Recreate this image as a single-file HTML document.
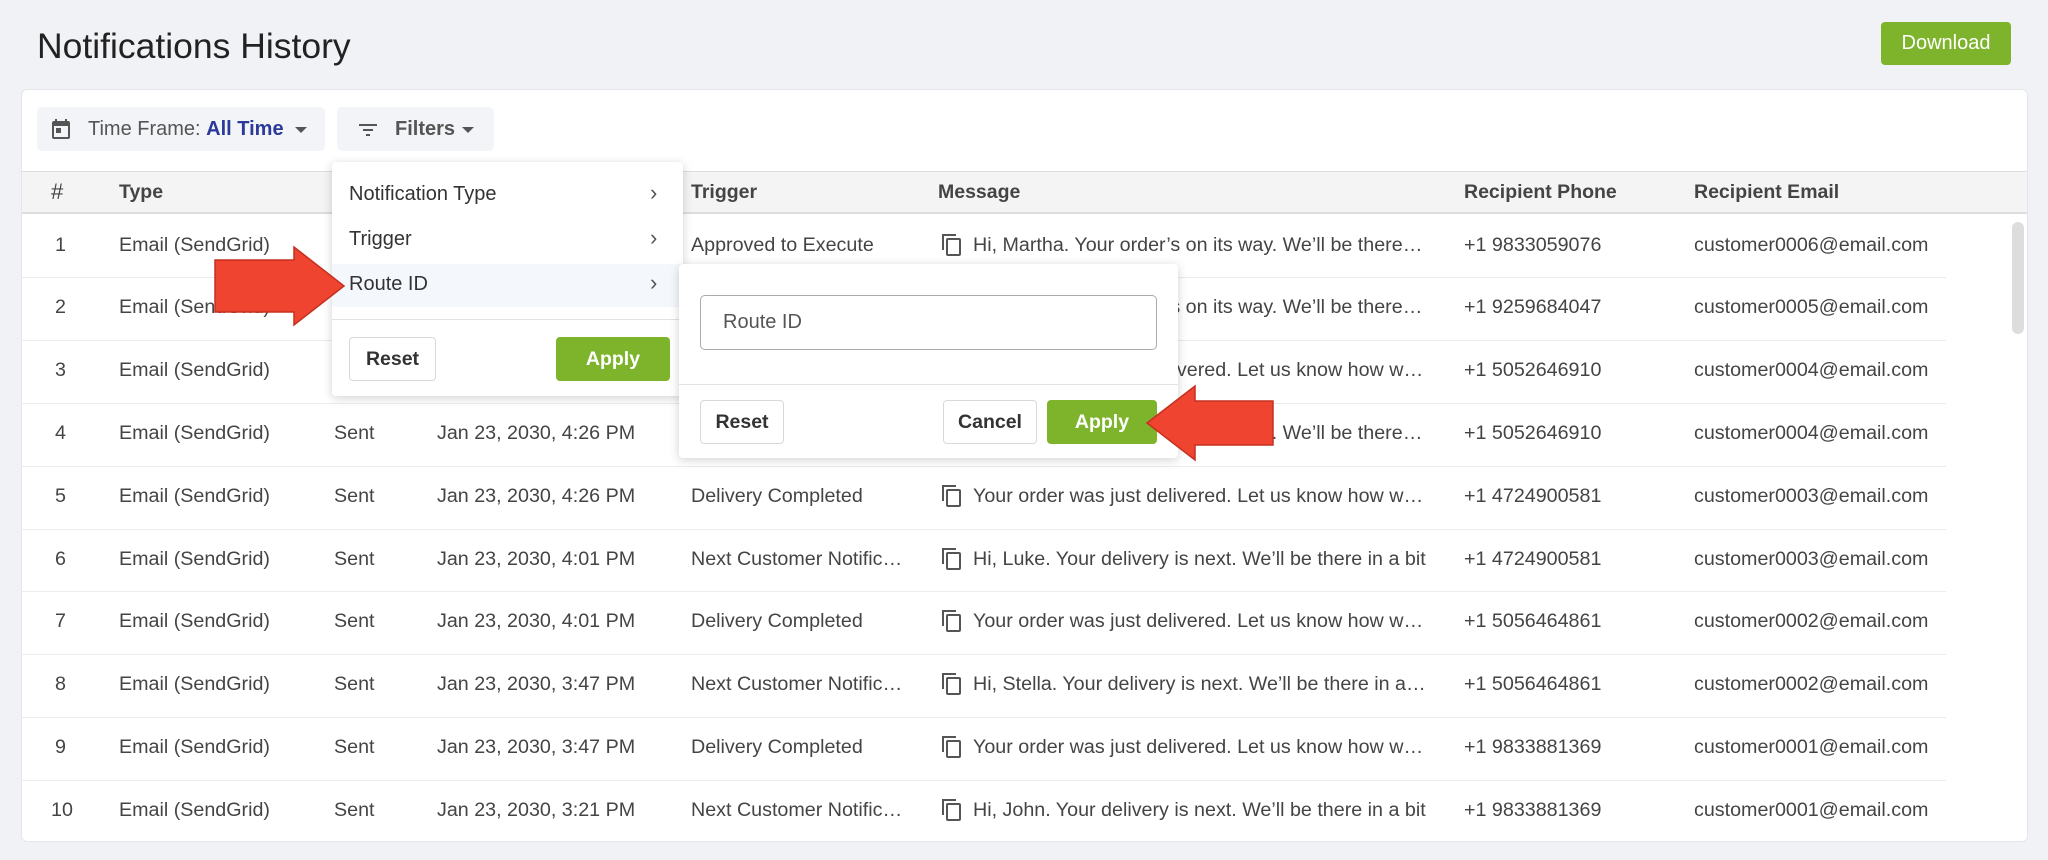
<!DOCTYPE html>
<html><head><meta charset="utf-8"><style>
*{box-sizing:border-box;margin:0;padding:0}
body{width:2048px;height:860px;overflow:hidden;background:#f1f2f6;font-family:"Liberation Sans",sans-serif;color:#3c3c3c;position:relative}
.a{position:absolute;white-space:nowrap}
.card{position:absolute;left:21px;top:89px;width:2007px;height:753px;background:#fff;border-radius:6px;border:1px solid #e4e6ea;overflow:hidden}
.btn{position:absolute;border:1px solid #d8d8d8;border-radius:4px;background:#fff;font-weight:bold;font-size:19.5px;color:#333;display:flex;align-items:center;justify-content:center}
.green{background:#7db42c;border-color:#7db42c;color:#fff}
.cell{position:absolute;font-size:19.7px;color:#444;white-space:nowrap}
.hd{position:absolute;font-size:19.5px;font-weight:bold;color:#444;top:181px}
.row{position:absolute;left:21px;width:1925px;height:1px;background:#ececec}
.pop{position:absolute;background:#fff;border-radius:4px;box-shadow:0 2px 10px rgba(0,0,0,.18)}
.chev{position:absolute;font-size:22px;color:#555}
</style></head><body>
<div class="a" style="left:37px;top:26px;font-size:35.5px;color:#222">Notifications History</div>
<div class="btn green" style="left:1881px;top:22px;width:130px;height:43px;font-weight:normal;font-size:20px">Download</div>
<div class="card"></div>
<div class="a" style="left:37px;top:107px;width:288px;height:44px;background:#f2f4f8;border-radius:5px"></div>
<svg class="a" style="left:49px;top:117px" width="24" height="24" viewBox="0 0 24 24"><path d="M19 4h-1V2h-2v2H8V2H6v2H5a2 2 0 0 0-2 2v14a2 2 0 0 0 2 2h14a2 2 0 0 0 2-2V6a2 2 0 0 0-2-2zm0 16H5V9h14zM7 11h5v5H7z" fill="#555"/></svg>
<div class="a" style="left:88px;top:118px;font-size:20px;color:#555">Time Frame: <span style="color:#2b3a9a;font-weight:bold">All Time</span></div>
<div class="a" style="left:295px;top:127px;width:0;height:0;border-left:6px solid transparent;border-right:6px solid transparent;border-top:6px solid #555"></div>
<div class="a" style="left:337px;top:107px;width:157px;height:44px;background:#f2f4f8;border-radius:5px"></div>
<svg class="a" style="left:356px;top:118px" width="24" height="24" viewBox="0 0 24 24"><path d="M3 6h18v2H3zm4 5h10v2H7zm3 5h4v2h-4z" fill="#555"/></svg>
<div class="a" style="left:395px;top:118px;font-size:20px;font-weight:bold;color:#555">Filters</div>
<div class="a" style="left:462px;top:127px;width:0;height:0;border-left:6px solid transparent;border-right:6px solid transparent;border-top:6px solid #555"></div>
<div class="a" style="left:22px;top:171px;width:2005px;height:43px;background:#f4f4f4;border-top:1px solid #ddd;border-bottom:2px solid #ddd"></div>
<div class="hd" style="left:51px;font-weight:normal;font-size:22px;top:179px">#</div>
<div class="hd" style="left:119px">Type</div>
<div class="hd" style="left:691px">Trigger</div>
<div class="hd" style="left:938px">Message</div>
<div class="hd" style="left:1464px">Recipient Phone</div>
<div class="hd" style="left:1694px">Recipient Email</div>
<div class="a" style="left:2012px;top:222px;width:12px;height:112px;background:#ddd;border-radius:6px"></div>
<div id="rows"></div>
<script>
var d=[["Approved to Execute","Hi, Martha. Your order’s on its way. We’ll be there in a bit","+1 9833059076","customer0006@email.com"],
["Approved to Execute","Hi, Martha. Your order’s on its way. We’ll be there in a bit","+1 9259684047","customer0005@email.com"],
["Delivery Completed","Your order was just delivered. Let us know how we did","+1 5052646910","customer0004@email.com"],
["Next Customer Notification","Hi, Martha. Your order’s on its way. We’ll be there in a bit","+1 5052646910","customer0004@email.com"],
["Delivery Completed","Your order was just delivered. Let us know how we did","+1 4724900581","customer0003@email.com"],
["Next Customer Notification","Hi, Luke. Your delivery is next. We’ll be there in a bit","+1 4724900581","customer0003@email.com"],
["Delivery Completed","Your order was just delivered. Let us know how we did","+1 5056464861","customer0002@email.com"],
["Next Customer Notification","Hi, Stella. Your delivery is next. We’ll be there in a bit","+1 5056464861","customer0002@email.com"],
["Delivery Completed","Your order was just delivered. Let us know how we did","+1 9833881369","customer0001@email.com"],
["Next Customer Notification","Hi, John. Your delivery is next. We’ll be there in a bit","+1 9833881369","customer0001@email.com"]];
var dates=["Jan 23, 2030, 4:26 PM","Jan 23, 2030, 4:26 PM","Jan 23, 2030, 4:26 PM","Jan 23, 2030, 4:26 PM","Jan 23, 2030, 4:26 PM","Jan 23, 2030, 4:01 PM","Jan 23, 2030, 4:01 PM","Jan 23, 2030, 3:47 PM","Jan 23, 2030, 3:47 PM","Jan 23, 2030, 3:21 PM"];
var h="";
for(var i=0;i<10;i++){var c=245.5+62.8*i,t=c-12;
if(i>0)h+='<div class="row" style="top:'+(c-31)+'px"></div>';
h+='<div class="cell" style="left:'+(i==9?51:55)+'px;top:'+t+'px">'+(i+1)+'</div>';
h+='<div class="cell" style="left:119px;top:'+t+'px">Email (SendGrid)</div>';
h+='<div class="cell" style="left:334px;top:'+t+'px">Sent</div>';
h+='<div class="cell" style="left:437px;top:'+t+'px">'+dates[i]+'</div>';
h+='<div class="cell" style="left:691px;top:'+t+'px;width:222px;overflow:hidden;text-overflow:ellipsis">'+d[i][0]+'</div>';
h+='<svg class="a" style="left:941px;top:'+(c-13)+'px" width="22" height="24" viewBox="0 0 22 24"><path d="M2 17V2h13" fill="none" stroke="#555" stroke-width="2"/><rect x="6" y="6" width="13" height="16" rx="1" fill="none" stroke="#555" stroke-width="2"/></svg>';
h+='<div class="cell" style="left:973px;top:'+t+'px;width:453px;overflow:hidden;text-overflow:ellipsis">'+d[i][1]+'</div>';
h+='<div class="cell" style="left:1464px;top:'+t+'px">'+d[i][2]+'</div>';
h+='<div class="cell" style="left:1694px;top:'+t+'px">'+d[i][3]+'</div>';}
document.getElementById('rows').innerHTML=h;
</script>
<div class="pop" style="left:332px;top:162px;width:351px;height:234px"></div>
<div class="a" style="left:332px;top:264px;width:351px;height:43px;background:#f4f7fc"></div>
<div class="a" style="left:349px;top:183px;font-size:20px;color:#333">Notification Type</div>
<div class="a" style="left:349px;top:228px;font-size:20px;color:#333">Trigger</div>
<div class="a" style="left:349px;top:273px;font-size:20px;color:#333">Route ID</div>
<div class="chev" style="left:650px;top:180px">›</div>
<div class="chev" style="left:650px;top:225px">›</div>
<div class="chev" style="left:650px;top:270px">›</div>
<div class="a" style="left:332px;top:319px;width:351px;height:1px;background:#e2e2e2"></div>
<div class="btn" style="left:349px;top:337px;width:87px;height:44px">Reset</div>
<div class="btn green" style="left:556px;top:337px;width:114px;height:44px">Apply</div>
<div class="pop" style="left:679px;top:264px;width:499px;height:194px"></div>
<div class="a" style="left:700px;top:295px;width:457px;height:55px;border:1.5px solid #aaa;border-radius:5px;font-size:20px;color:#555;padding:15px 0 0 22px">Route ID</div>
<div class="a" style="left:679px;top:384px;width:499px;height:1px;background:#e2e2e2"></div>
<div class="btn" style="left:700px;top:400px;width:84px;height:44px">Reset</div>
<div class="btn" style="left:943px;top:400px;width:94px;height:44px">Cancel</div>
<div class="btn green" style="left:1047px;top:400px;width:110px;height:44px">Apply</div>
<svg class="a" style="left:210px;top:243px" width="140" height="86" viewBox="0 0 140 86"><path d="M5 17h79V4l50 39-50 39V69H5z" fill="#ee4430" stroke="#c5301f" stroke-width="1.5"/></svg>
<svg class="a" style="left:1140px;top:380px" width="140" height="86" viewBox="0 0 140 86"><path d="M133 21H55V6L7 43l48 37V65h78z" fill="#ee4430" stroke="#c5301f" stroke-width="1.5"/></svg>
</body></html>
